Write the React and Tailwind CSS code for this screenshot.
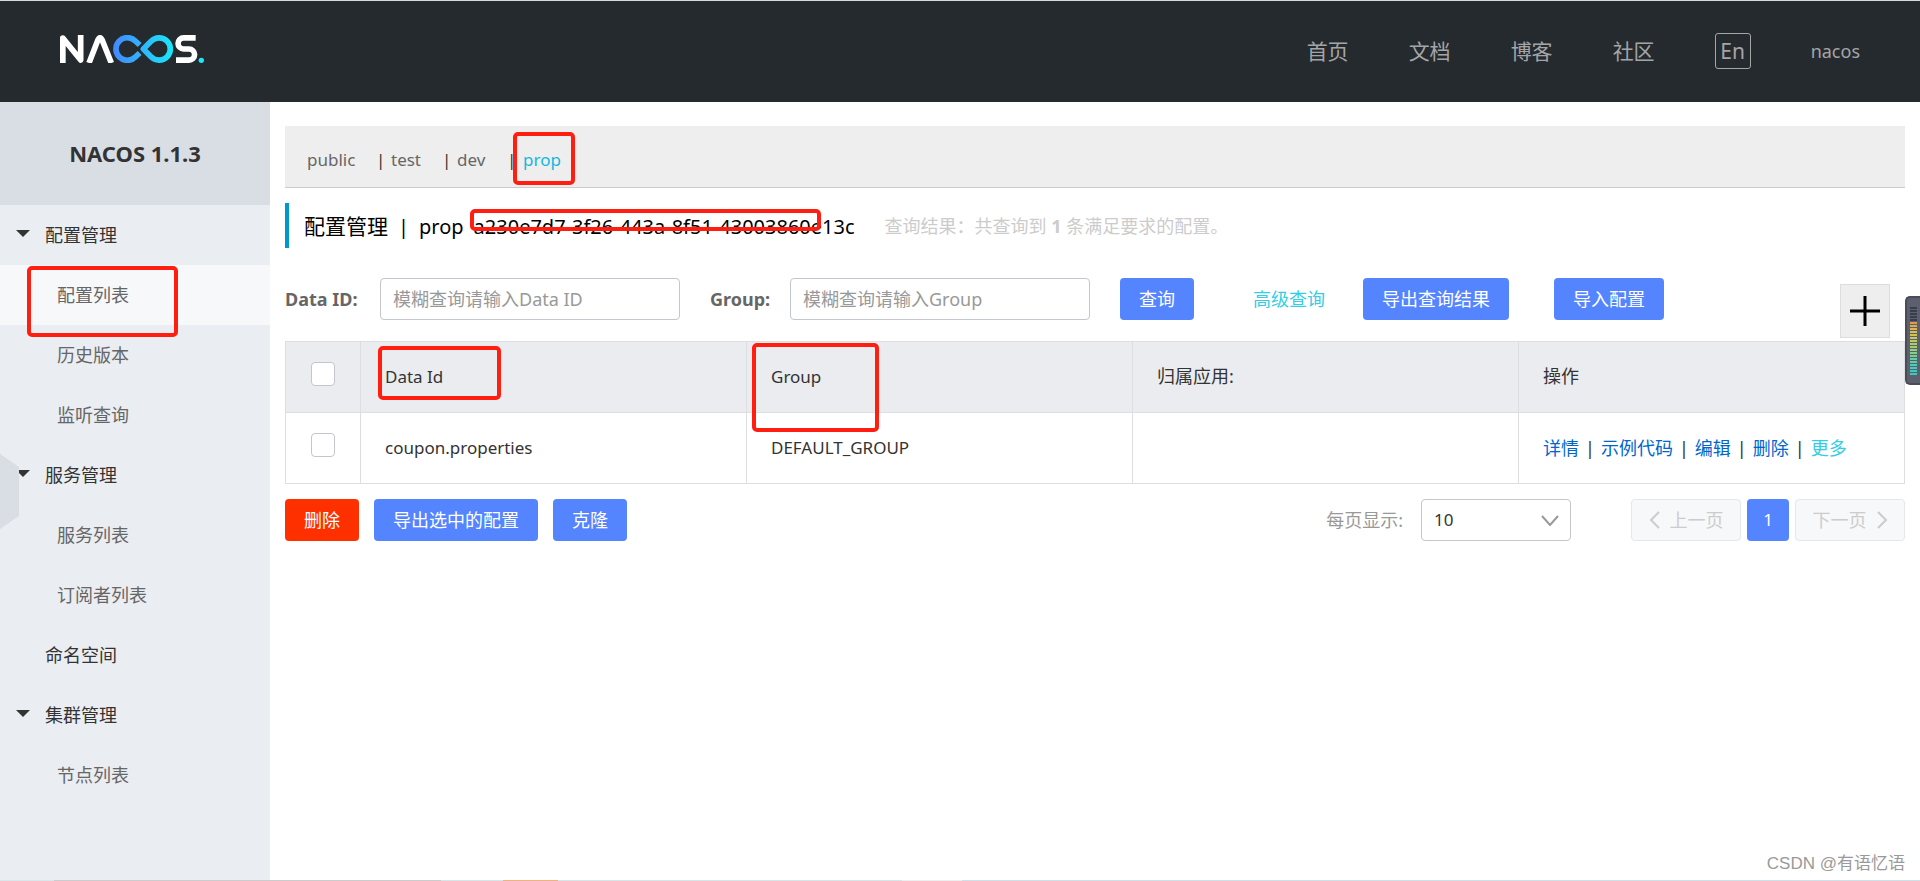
import React from "react";

const LINKS = ["首页", "文档", "博客", "社区"];

const MENU = [
  { label: "配置管理", children: ["配置列表", "历史版本", "监听查询"] },
  { label: "服务管理", children: ["服务列表", "订阅者列表"] },
  { label: "命名空间" },
  { label: "集群管理", children: ["节点列表"] },
];

const METER = [
  "#3a3e4a", "#3a3e4a", "#3a3e4a", "#3a3e4a", "#3a3e4a", "#e09a50", "#dfa850", "#dcb450", "#d8be52",
  "#d0c455", "#c6c95a", "#bccb60", "#aecd68", "#a0cf72", "#92cf7c", "#84d088", "#74cf94", "#66cea0",
  "#5acdaa", "#50ccb4", "#48cab8", "#42c8bc", "#40c6bc",
];

const primary = "h-[42px] rounded-[4px] bg-[#5584ff] px-[19px] text-[18px] text-white";

/* Red marker frame; it fills whatever box its position classes give it. */
function Marker({ className }) {
  return (
    <span
      aria-hidden="true"
      className={`pointer-events-none absolute z-10 rounded-[5px] border-4 border-[#ff1e10] ${className}`}
    />
  );
}

function Logo() {
  return (
    <svg viewBox="0 0 432 84" className="h-7 w-36" fill="none" role="img" aria-label="Nacos">
      <defs>
        <linearGradient id="loop" gradientUnits="userSpaceOnUse" x1="160" y1="0" x2="340" y2="0">
          <stop offset="0" stopColor="#4488ff" />
          <stop offset="1" stopColor="#18e8f8" />
        </linearGradient>
      </defs>
      <g stroke="#fff" strokeWidth="17" strokeLinejoin="round">
        <path d="M8.5 84V9L62 75V0" />
        <path d="M87 84L114 14Q120 2 126 14L154 84" />
        <path d="M407 8.5H371a16.5 16.5 0 0 0 0 33.5h16a16.5 16.5 0 0 1 0 33.500H348" />
      </g>
      <g stroke="url(#loop)" strokeWidth="17">
        <path d="M239 30L226 18A34 34 0 1 0 226 66L239 54" />
        <path d="M250 42L273 19A33.500 33.500 0 1 1 273 65Z" strokeLinejoin="round" />
      </g>
      <circle cx="424" cy="76" r="8" fill="#18e8f8" />
    </svg>
  );
}

function Header() {
  return (
    <header className="flex h-[102px] items-center justify-between border-t border-[#d4dcda] bg-[#252a2f] px-[60px] pb-[2px]">
      <a href="#home" className="-mt-1">
        <Logo />
      </a>
      <nav className="flex items-center gap-[60px] text-[21px] leading-[36px] text-[#a3a5a7]">
        {LINKS.map((l) => (
          <a key={l} href="#nav">
            {l}
          </a>
        ))}
        <button className="h-9 w-9 rounded-[3px] border border-[#a3a5a7] leading-[32px]">En</button>
        <a href="#user" className="text-[18px]">
          nacos
        </a>
      </nav>
    </header>
  );
}

function Sidebar() {
  return (
    <aside className="relative w-[270px] shrink-0 bg-[#eaedf2] text-[18px]">
      <h1 className="bg-[#d9dee5] text-center text-[22px] leading-[103px] font-bold text-[#333]">NACOS 1.1.3</h1>
      <ul className="leading-[60px]">
        {MENU.map((group) => (
          <li key={group.label}>
            <a href="#menu" className="flex items-center text-[#333]">
              <span className="flex w-[45px] pb-1 pl-4">
                {group.children && (
                  <svg viewBox="0 0 14 7" className="h-[7px] w-[14px]" fill="#333">
                    <path d="M0 0H14L7 7Z" />
                  </svg>
                )}
              </span>
              {group.label}
            </a>
            {group.children && (
              <ul>
                {group.children.map((c) => (
                  <li key={c} className={c === "配置列表" ? "relative bg-[#f6f8fa]" : ""}>
                    <a href="#menu" className="block pl-[57px] text-[#666]">
                      {c}
                    </a>
                    {c === "配置列表" && <Marker className="top-[1px] left-[27px] h-[71px] w-[151px]" />}
                  </li>
                ))}
              </ul>
            )}
          </li>
        ))}
      </ul>
      <button aria-label="收起" className="absolute top-[352px] left-0">
        <svg viewBox="0 0 19 75" className="h-[75px] w-[19px]" fill="#d9dee5">
          <path d="M0 0L19 13V62L0 75Z" />
        </svg>
      </button>
    </aside>
  );
}

function Namespaces() {
  return (
    <nav className="flex h-[62px] items-center border-b border-[#ccc] bg-[#eee] px-[22px] pt-[6px] text-[17px] text-[#666]">
      <a href="#public" className="w-[69px]">public</a>
      <span className="w-[15px] text-[#333]">|</span>
      <a href="#test" className="w-[51px]">test</a>
      <span className="w-[15px] text-[#333]">|</span>
      <a href="#dev" className="w-[50px]">dev</a>
      <span className="w-[16px] text-[#333]">|</span>
      <a href="#prop" className="relative text-[#15b8dc]">
        prop
        <Marker className="-top-[15px] -left-[10px] h-[53px] w-[62px]" />
      </a>
    </nav>
  );
}

function TitleBar() {
  return (
    <div className="mt-[15px] flex h-[45px] items-center border-l-4 border-[#09c] pt-[2px] pl-[15px] text-[20px] text-black">
      <h2 className="flex items-center whitespace-pre">
        <span className="text-[21px]">配置管理</span>
        <span className="px-[10px]">|</span>
        <span>prop</span>
        <span className="relative ml-[10px]">
          a230e7d7-3f26-443a-8f51-43003860e13c
          <Marker className="top-[-3px] -left-[4px] h-[22px] w-[351px]" />
        </span>
      </h2>
      <p className="ml-[30px] text-[18px] text-[#ccc]">
        查询结果：共查询到 <strong>1</strong> 条满足要求的配置。
      </p>
    </div>
  );
}

function Search() {
  const field =
    "ml-[19px] h-[42px] w-[300px] rounded-[4px] border border-[#c4c6cf] bg-white px-3 text-[18px] text-[#333] placeholder:text-[#999]";
  return (
    <form className="mt-[30px] flex h-[63px] items-start text-[18px]" onSubmit={(e) => e.preventDefault()}>
      <label htmlFor="dataId" className="w-[76px] leading-[42px] font-bold whitespace-nowrap text-[#666]">
        Data ID:
      </label>
      <input id="dataId" className={field} placeholder="模糊查询请输入Data ID" />
      <label htmlFor="group" className="ml-[30px] w-[61px] leading-[42px] font-bold whitespace-nowrap text-[#666]">
        Group:
      </label>
      <input id="group" className={field} placeholder="模糊查询请输入Group" />
      <button className={`ml-[30px] ${primary}`}>查询</button>
      <a href="#advanced" className="ml-[59px] leading-[42px] text-[#33cde5]">
        高级查询
      </a>
      <button className={`ml-[38px] ${primary}`}>导出查询结果</button>
      <button className={`ml-[45px] ${primary}`}>导入配置</button>
      <button
        aria-label="新建配置"
        className="mt-[6px] mr-[15px] ml-auto flex h-[54px] w-[50px] items-center justify-center border border-[#ddd] bg-[#eee]"
      >
        <svg viewBox="0 0 30 30" className="h-[30px] w-[30px]" stroke="#000" strokeWidth="3">
          <path d="M15 0V30M0 15H30" />
        </svg>
      </button>
    </form>
  );
}

function Check({ label }) {
  return (
    <input
      type="checkbox"
      aria-label={label}
      className="mx-auto mb-[6px] block h-6 w-6 appearance-none rounded-[4px] border border-[#c4c6cf] bg-white"
    />
  );
}

function ConfigTable() {
  const cell = "border border-[#dcdee3] px-6 text-left font-normal";
  const check = "w-[75px] border border-[#dcdee3]";
  const bar = <span className="px-[6px] text-[#333]">|</span>;
  return (
    <table className="w-full table-fixed border-collapse text-[18px] text-[#333]">
      <thead>
        <tr className="h-[71px] bg-[#ebecf0]">
          <th className={check}>
            <Check label="全选" />
          </th>
          <th className={`${cell} pb-[2px]`}>
            <span className="relative text-[17px]">
              Data Id
              <Marker className="-top-[19px] -left-[7px] h-[54px] w-[123px]" />
            </span>
          </th>
          <th className={`${cell} pb-[2px]`}>
            <span className="relative text-[17px]">
              Group
              <Marker className="-top-[22px] -left-[19px] h-[89px] w-[127px]" />
            </span>
          </th>
          <th className={`${cell} pb-[2px]`}>归属应用:</th>
          <th className={`${cell} pb-[2px]`}>操作</th>
        </tr>
      </thead>
      <tbody>
        <tr className="h-[71px]">
          <td className={check}>
            <Check label="选择 coupon.properties" />
          </td>
          <td className={`${cell} text-[17px]`}>coupon.properties</td>
          <td className={`${cell} text-[17px]`}>DEFAULT_GROUP</td>
          <td className={cell}></td>
          <td className={`${cell} whitespace-nowrap text-[#06c]`}>
            <a href="#detail">详情</a>
            {bar}
            <a href="#sample">示例代码</a>
            {bar}
            <a href="#edit">编辑</a>
            {bar}
            <a href="#delete">删除</a>
            {bar}
            <a href="#more" className="text-[#33cde5]">更多</a>
          </td>
        </tr>
      </tbody>
    </table>
  );
}

function Footer() {
  const page =
    "flex h-[42px] w-[110px] items-center justify-center gap-[10px] rounded-[4px] border border-[#e6e7eb] bg-[#f7f8fa] text-[#ccc]";
  return (
    <div className="mt-[15px] flex items-center text-[18px]">
      <button className="h-[42px] rounded-[4px] bg-[#ff3000] px-[19px] text-white">删除</button>
      <button className={`ml-[15px] ${primary}`}>导出选中的配置</button>
      <button className={`ml-[15px] ${primary}`}>克隆</button>
      <label htmlFor="size" className="mr-[18px] ml-auto text-[#999]">
        每页显示:
      </label>
      <div className="relative mr-[60px]">
        <select
          id="size"
          defaultValue="10"
          className="block h-[42px] w-[150px] appearance-none rounded-[4px] border border-[#c4c6cf] bg-white px-3 text-[17px] text-[#333]"
        >
          <option>10</option>
          <option>20</option>
          <option>50</option>
        </select>
        <svg viewBox="0 0 18 11" className="pointer-events-none absolute top-4 right-3 h-[11px] w-[18px]" fill="none" stroke="#999" strokeWidth="2">
          <path d="M1 1L9 10L17 1" />
        </svg>
      </div>
      <div className="flex gap-[6px]">
        <button disabled className={page}>
          <svg viewBox="0 0 11 18" className="h-[18px] w-[11px]" fill="none" stroke="#ccc" strokeWidth="2">
            <path d="M10 1L2 9L10 17" />
          </svg>
          上一页
        </button>
        <button className="h-[42px] w-[42px] rounded-[4px] bg-[#5584ff] text-[17px] text-white">1</button>
        <button disabled className={page}>
          下一页
          <svg viewBox="0 0 11 18" className="h-[18px] w-[11px]" fill="none" stroke="#ccc" strokeWidth="2">
            <path d="M1 1L9 9L1 17" />
          </svg>
        </button>
      </div>
    </div>
  );
}

/* Level meter docked to the right edge of the window. */
function Meter() {
  return (
    <div className="absolute top-[296px] right-0 z-20 flex h-[89px] w-[15px] flex-col items-center gap-px rounded-l-[5px] border-2 border-r-0 border-[#4a4d58] bg-[#5b5f6e] pt-[9px]">
      {METER.map((c, i) => (
        <span key={i} className="h-[2px] w-[7px]" style={{ backgroundColor: c }} />
      ))}
    </div>
  );
}

export default function App() {
  return (
    <div className="relative flex min-h-screen flex-col bg-white font-['Noto_Sans','Noto_Sans_CJK_SC',sans-serif]">
      <Header />
      <div className="flex grow">
        <Sidebar />
        <main className="min-w-0 grow px-[15px] pt-6">
          <Namespaces />
          <TitleBar />
          <Search />
          <ConfigTable />
          <Footer />
        </main>
      </div>
      <div className="flex h-px bg-[#cfe0e8]">
        <span className="w-[54px] bg-[#d9e6ea]" />
        <span className="w-[387px] bg-[#ccc]" />
        <span className="w-[62px] bg-[#d5e5e8]" />
        <span className="w-[55px] bg-[#f3b17c]" />
        <span className="w-[344px] bg-[#d5e5e8]" />
        <span className="w-[60px] bg-[#eee]" />
      </div>
      <Meter />
      <span className="absolute right-[15px] bottom-[5px] font-['Liberation_Sans','Noto_Sans_CJK_SC',sans-serif] text-[17px] text-[#999]">
        CSDN @有语忆语
      </span>
    </div>
  );
}
